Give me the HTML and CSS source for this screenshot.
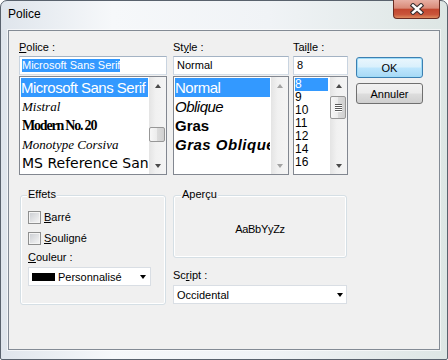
FILE: index.html
```html
<!DOCTYPE html>
<html lang="fr">
<head>
  <meta charset="UTF-8">
  <title>Police</title>
  <link rel="stylesheet" href="styles.css">
</head>
<body>
  <div class="window">
    <div class="titlebar">
      <span class="title">Police</span>
      <button class="close">
        <svg width="14" height="12" viewBox="0 0 14 12">
          <path d="M3 2.5 L11 9.5 M11 2.5 L3 9.5" stroke="#3a2f30" stroke-width="4.6" stroke-linecap="square"/>
          <path d="M3 2.5 L11 9.5 M11 2.5 L3 9.5" stroke="#fff" stroke-width="2.4" stroke-linecap="square"/>
        </svg>
      </button>
    </div>

    <div class="client">
      <div class="top">
        <div class="col col-font">
          <div class="label"><u>P</u>olice :</div>
          <div class="input"><span class="sel">Microsoft Sans Serif</span></div>
          <div class="list">
            <div class="items">
              <div class="item big selected">Microsoft Sans Serif</div>
              <div class="item f-mistral">Mistral</div>
              <div class="item f-modern">Modern No. 20</div>
              <div class="item f-corsiva">Monotype Corsiva</div>
              <div class="item f-msref">MS Reference San</div>
            </div>
            <div class="scroll">
              <div class="arrow"><span class="up"></span></div>
              <div class="track"><div class="thumb thumb-font"></div></div>
              <div class="arrow"><span class="down"></span></div>
            </div>
          </div>
        </div>

        <div class="col col-style">
          <div class="label">St<u>y</u>le :</div>
          <div class="input">Normal</div>
          <div class="list">
            <div class="items">
              <div class="item big selected">Normal</div>
              <div class="item big italic">Oblique</div>
              <div class="item big bold">Gras</div>
              <div class="item big bold italic wide">Gras Oblique</div>
            </div>
            <div class="scroll disabled">
              <div class="arrow"><span class="up"></span></div>
              <div class="track"></div>
              <div class="arrow"><span class="down"></span></div>
            </div>
          </div>
        </div>

        <div class="col col-size">
          <div class="label">Tai<u>l</u>le :</div>
          <div class="input">8</div>
          <div class="list">
            <div class="items">
              <div class="item size selected">8</div>
              <div class="item size">9</div>
              <div class="item size">10</div>
              <div class="item size">11</div>
              <div class="item size">12</div>
              <div class="item size">14</div>
              <div class="item size">16</div>
            </div>
            <div class="scroll">
              <div class="arrow"><span class="up"></span></div>
              <div class="track">
                <div class="thumb thumb-size">
                  <span class="grip"></span><span class="grip"></span><span class="grip"></span><span class="grip"></span>
                </div>
              </div>
              <div class="arrow"><span class="down"></span></div>
            </div>
          </div>
        </div>

        <div class="buttons">
          <button class="btn default">OK</button>
          <button class="btn">Annuler</button>
        </div>
      </div>

      <div class="bottom">
        <div class="group effets">
          <div class="group-title">Effets</div>
          <div class="check first"><span class="box"></span><span class="check-label"><u>B</u>arré</span></div>
          <div class="check"><span class="box"></span><span class="check-label"><u>S</u>ouligné</span></div>
          <div class="label couleur"><u>C</u>ouleur :</div>
          <div class="combo combo-color">
            <span class="swatch"></span>
            <span class="combo-text">Personnalisé</span>
            <span class="down"></span>
          </div>
        </div>

        <div class="right">
          <div class="group apercu">
            <div class="group-title">Aperçu</div>
            <div class="sample">AaBbYyZz</div>
          </div>
          <div class="label script">Sc<u>r</u>ipt :</div>
          <div class="combo combo-script">
            <span class="combo-text">Occidental</span>
            <span class="down"></span>
          </div>
        </div>
      </div>
    </div>
  </div>
</body>
</html>
```

FILE: styles.css
```css
body {
  margin: 0;
  font-family: "Liberation Sans", Arial, sans-serif;
  font-size: 11px;
  color: #000;
}

.window {
  width: 448px;
  height: 360px;
  box-sizing: border-box;
  border: 1px solid #59626d;
  border-radius: 7px 7px 2px 2px;
  padding: 0 7px 9px;
  background: linear-gradient(to right, #dfe5ec, #f6f8fa 25%, #f0f3f6 60%, #dde6e4);
  display: flex;
  flex-direction: column;
}

.titlebar {
  height: 29px;
  flex-shrink: 0;
  display: flex;
  align-items: flex-start;
}

.title {
  margin-top: 6px;
  font-family: "Segoe UI", "Liberation Sans", sans-serif;
  font-size: 12px;
  line-height: 15px;
}

.close {
  margin-left: auto;
  margin-top: -1px;
  width: 47px;
  height: 19px;
  padding: 0;
  border: 1px solid #6a2c22;
  border-top: none;
  border-radius: 0 0 4px 4px;
  background: linear-gradient(#e8b0a4, #d98a78 45%, #c2472f 52%, #c9553a 80%, #dd8a5e);
  display: flex;
  align-items: center;
  justify-content: center;
}

.client {
  flex: 1;
  border: 1px solid #838b95;
  background: #f0f0f0;
  padding: 10px 0 0 10px;
  box-shadow: 0 0 0 1px rgba(255, 255, 255, 0.6);
}

.top {
  display: flex;
  align-items: flex-start;
}

.col-font { width: 148px; }
.col-style { width: 116px; margin-left: 6px; }
.col-size { width: 55px; margin-left: 4px; }

.label {
  height: 15px;
  line-height: 13px;
  white-space: nowrap;
}

.input {
  height: 19px;
  box-sizing: border-box;
  border: 1px solid;
  border-color: #a4b3c4 #c9d4e0 #d6dfe8 #c9d4e0;
  background: #fff;
  padding: 2px 0 0 3px;
  margin-bottom: 1px;
  line-height: 13px;
  white-space: nowrap;
  overflow: hidden;
}

.sel {
  display: inline-block;
  margin-left: -1px;
  background: #3399ff;
  color: #fff;
}

.list {
  height: 99px;
  box-sizing: border-box;
  border: 1px solid #828790;
  background: #fff;
  display: flex;
}

.items {
  flex: 1;
  min-width: 0;
  padding: 1px;
  overflow: hidden;
}

.item {
  height: 19px;
  line-height: 19px;
  white-space: nowrap;
  overflow: hidden;
}

.item.selected {
  background: #3399ff;
  color: #fff;
}

.big {
  font-size: 15px;
  letter-spacing: -0.5px;
}

.italic { font-style: italic; }

.bold {
  font-weight: bold;
  letter-spacing: 0;
}

.bold.wide { letter-spacing: 0.5px; }

.f-mistral {
  font-family: "Liberation Serif", serif;
  font-style: italic;
  font-size: 13px;
  padding-left: 1px;
}

.f-modern {
  font-family: "Liberation Serif", serif;
  font-weight: bold;
  font-size: 14px;
  letter-spacing: -1.2px;
  padding-left: 1px;
}

.f-corsiva {
  font-family: "Liberation Serif", serif;
  font-style: italic;
  font-size: 13px;
  padding-left: 1px;
}

.f-msref {
  font-family: "DejaVu Sans", sans-serif;
  font-size: 14px;
  padding-left: 1px;
}

.item.size {
  height: 13px;
  line-height: 13px;
  font-size: 12px;
}

.item.size.selected {
  margin-right: 1px;
}

.scroll {
  width: 17px;
  flex-shrink: 0;
  display: flex;
  flex-direction: column;
  background: linear-gradient(to right, #e4e4e4, #f1f1f1 40%, #f4f4f4);
}

.arrow {
  height: 17px;
  display: flex;
  align-items: center;
  justify-content: center;
}

.up, .down {
  width: 0;
  height: 0;
  border-left: 3.5px solid transparent;
  border-right: 3.5px solid transparent;
}

.up { border-bottom: 4px solid #4a4a4a; }
.down { border-top: 4px solid #4a4a4a; }

.scroll.disabled .up { border-bottom-color: #a3a3a3; }
.scroll.disabled .down { border-top-color: #a3a3a3; }

.track {
  flex: 1;
}

.thumb {
  margin: 0 1px 0 0;
  box-sizing: border-box;
  border: 1px solid #979797;
  border-radius: 2px;
  background: linear-gradient(to right, #f7f7f7, #ececec 50%, #dcdcdc 50%, #d0d0d0);
  display: flex;
  flex-direction: column;
  align-items: center;
  justify-content: center;
  gap: 1px;
}

.thumb-font { margin-top: 33px; height: 15px; }
.thumb-size { margin-top: 2px; height: 23px; }

.grip {
  width: 7px;
  height: 1px;
  background: #5a5a5a;
  box-shadow: 0 1px 0 #fff;
}

.buttons {
  width: 67px;
  margin-left: 8px;
  padding-top: 16px;
  display: flex;
  flex-direction: column;
  gap: 5px;
}

.btn {
  height: 21px;
  box-sizing: border-box;
  padding: 0;
  border: 1px solid #707070;
  border-radius: 3px;
  background: linear-gradient(#f2f2f2, #ebebeb 48%, #dddddd 52%, #cfcfcf);
  font: inherit;
  color: #000;
}

.btn.default {
  border-color: #3c7fb1;
  background: linear-gradient(#eaf6fd, #d9f0fc 48%, #bee6fd 52%, #a7d9f5);
  box-shadow: inset 0 0 0 1px #9fdcf8;
}

.bottom {
  display: flex;
  align-items: flex-start;
  margin-top: 20px;
  padding-left: 1px;
}

.group {
  box-sizing: border-box;
  border: 1px solid #d5dfe5;
  border-radius: 3px;
  box-shadow: inset 0 0 0 1px #fff;
  display: flex;
  flex-direction: column;
  padding-left: 7px;
}

.group-title {
  align-self: flex-start;
  margin-top: -8px;
  padding: 0 1px;
  line-height: 13px;
  background: #f0f0f0;
}

.effets {
  width: 146px;
  height: 110px;
}

.effets .group-title { margin-left: -1px; }

.check {
  display: flex;
  align-items: center;
  height: 13px;
  margin-top: 8px;
}

.check.first { margin-top: 10px; }

.box {
  width: 13px;
  height: 13px;
  box-sizing: border-box;
  border: 1px solid #8e8f8f;
  background: linear-gradient(135deg, #c9ccd1, #f7f7f7);
  box-shadow: inset 0 0 0 1px #f4f4f4;
}

.check-label {
  margin-left: 3px;
  line-height: 13px;
}

.label.couleur {
  margin-top: 6px;
  height: 16px;
}

.combo {
  height: 19px;
  box-sizing: border-box;
  border: 1px solid #d9dee4;
  background: #fff;
  display: flex;
  align-items: center;
  padding-left: 3px;
}

.combo .down {
  margin-left: auto;
  margin-right: 4px;
  border-top-color: #000;
}

.combo-color { width: 123px; }

.swatch {
  width: 23px;
  height: 8px;
  background: #000;
  margin-right: 3px;
}

.right {
  margin-left: 7px;
  display: flex;
  flex-direction: column;
}

.apercu {
  width: 174px;
  height: 63px;
}

.sample {
  flex: 1;
  display: flex;
  align-items: center;
  justify-content: center;
  margin-left: -7px;
  letter-spacing: -0.3px;
}

.label.script {
  margin-top: 11px;
  height: 16px;
}

.combo-script {
  width: 174px;
}

.combo-script .down { margin-right: 3px; }
```
